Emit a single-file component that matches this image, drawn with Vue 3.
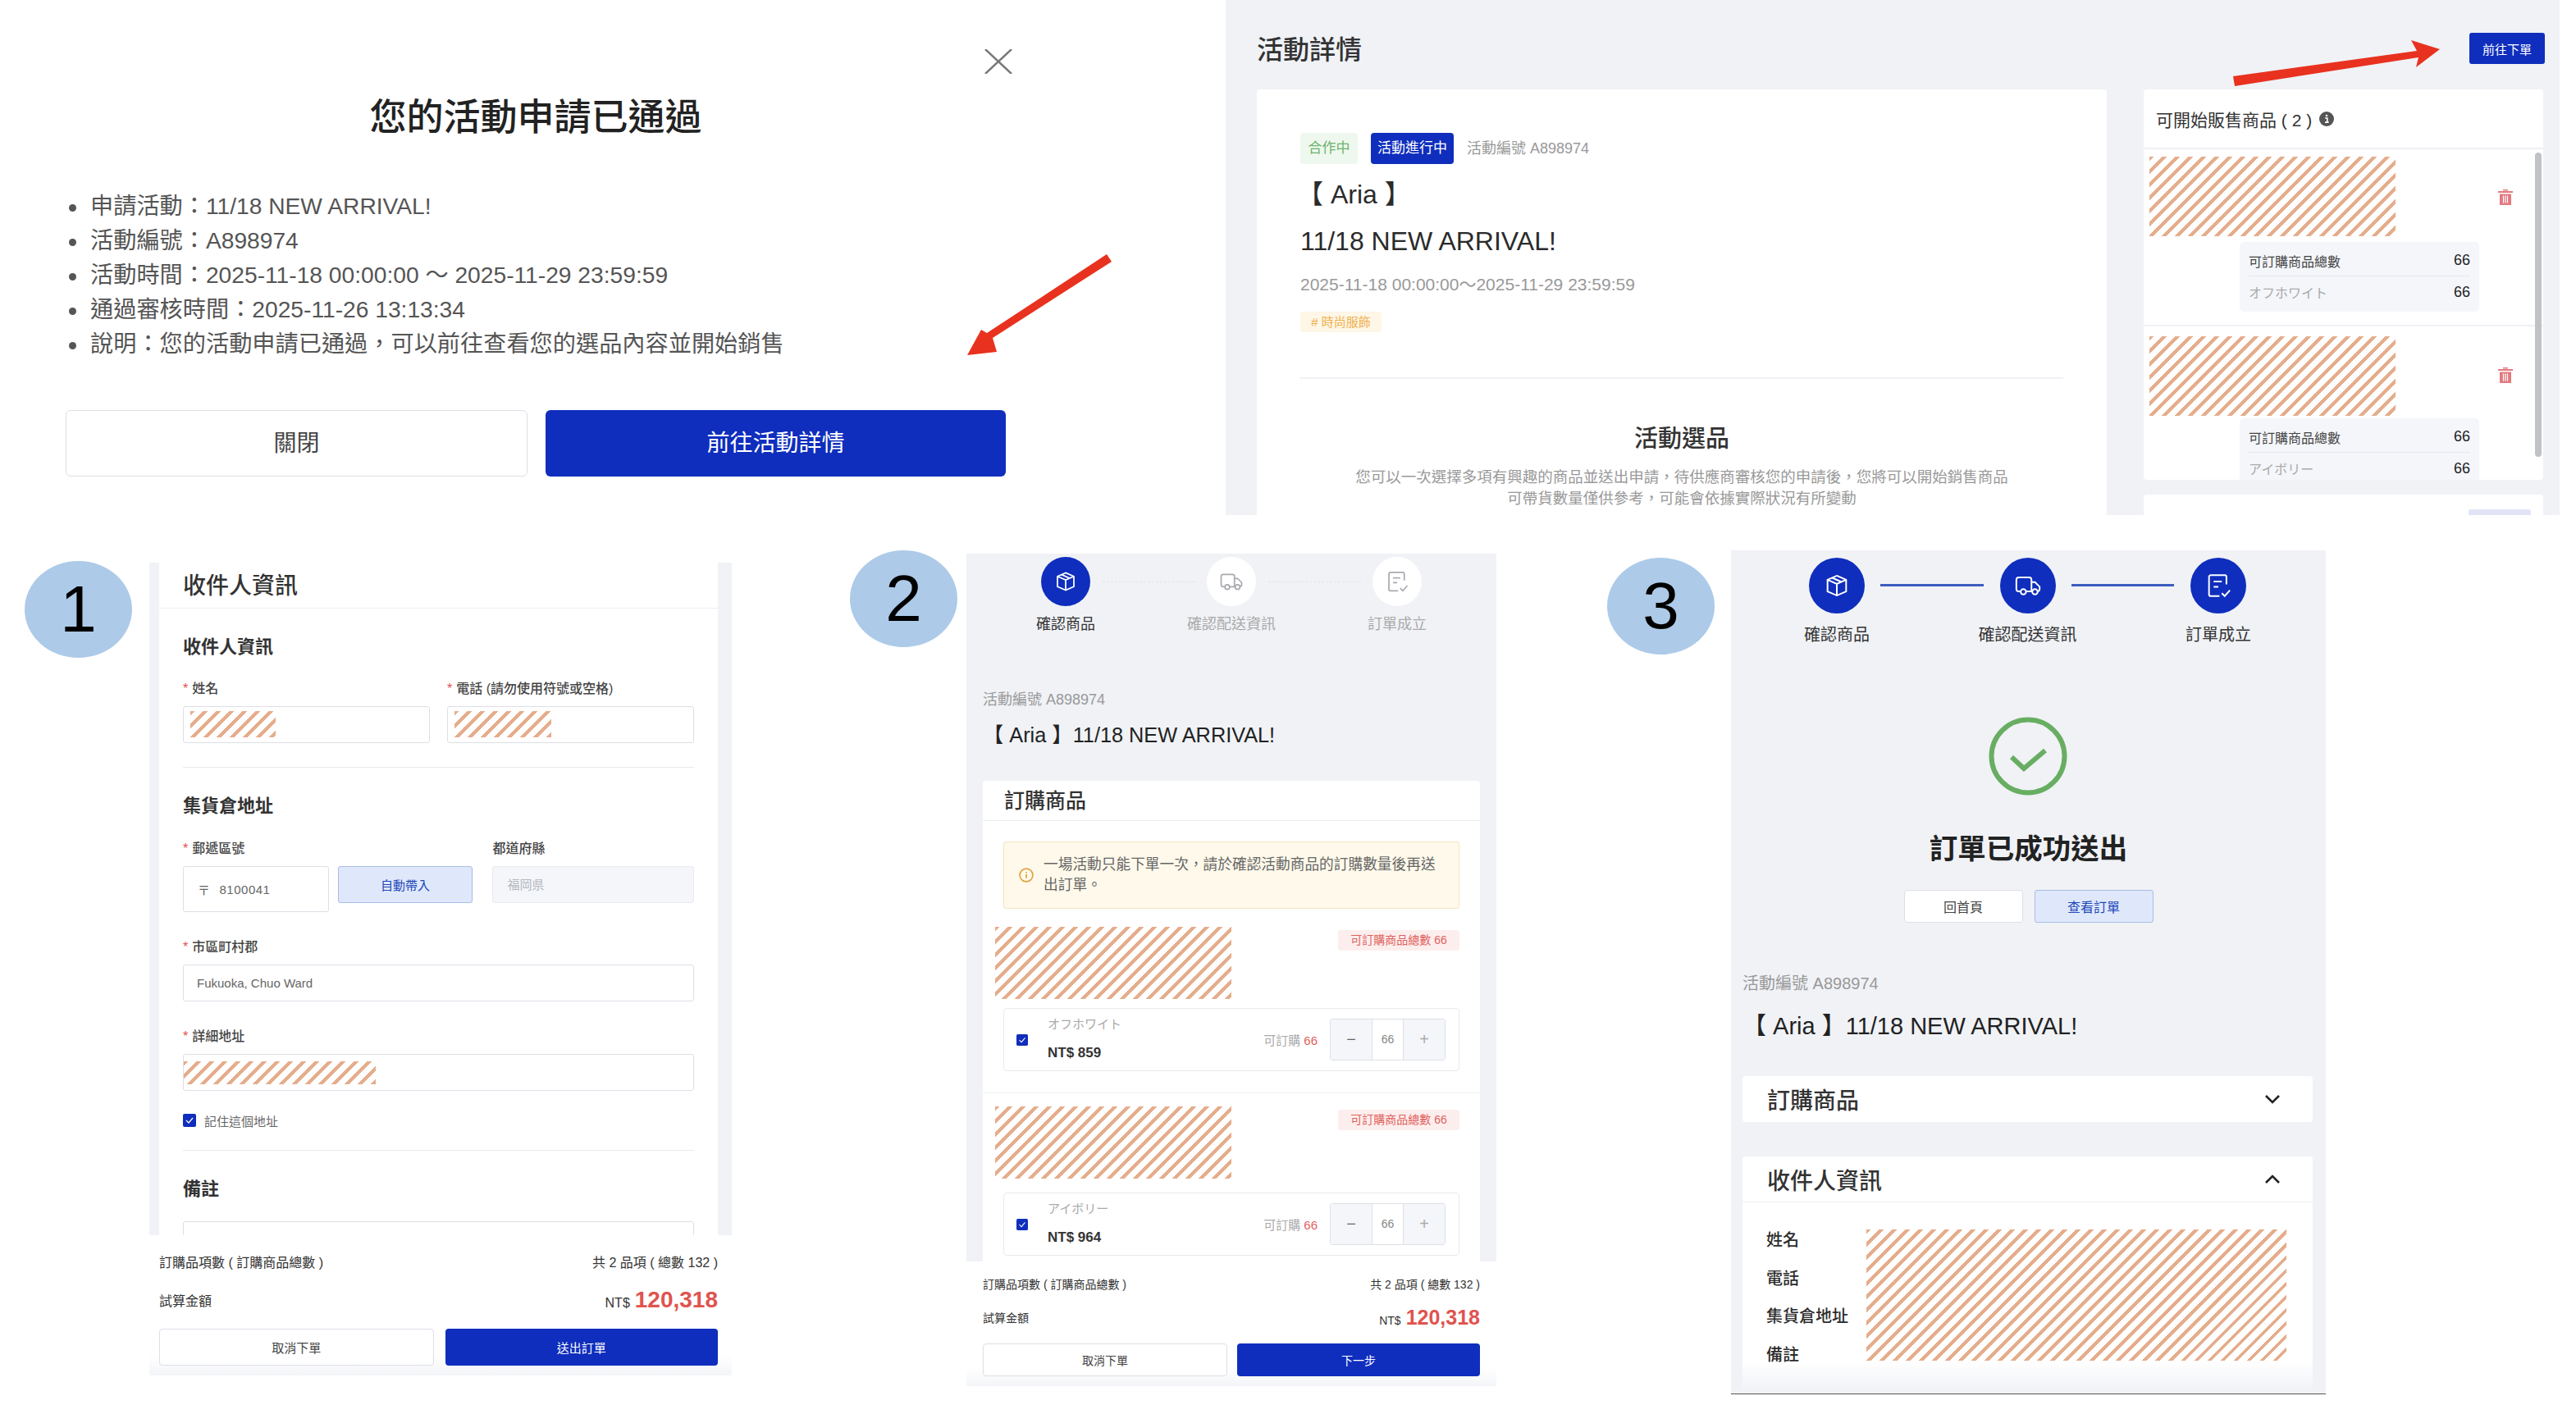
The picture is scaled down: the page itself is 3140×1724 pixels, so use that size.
<script setup>
const infoLines = [
  "申請活動：11/18 NEW ARRIVAL!",
  "活動編號：A898974",
  "活動時間：2025-11-18 00:00:00 ～ 2025-11-29 23:59:59",
  "通過審核時間：2025-11-26 13:13:34",
  "說明：您的活動申請已通過，可以前往查看您的選品內容並開始銷售",
];

const saleItems = [{ color: "オフホワイト" }, { color: "アイボリー" }];

const orderItems = [
  { color: "オフホワイト", price: "NT$ 859" },
  { color: "アイボリー", price: "NT$ 964" },
];

const steps = ["確認商品", "確認配送資訊", "訂單成立"];
const receiverRows = ["姓名", "電話", "集貨倉地址", "備註"];
</script>

<template>
  <div class="page">
    <section class="top">
      <div class="modal">
        <svg class="close" viewBox="0 0 34 30" width="34" height="30">
          <path d="M1 0 L33 30 M33 0 L1 30" stroke="#777" stroke-width="2.4" fill="none" />
        </svg>
        <h2 class="modal-title">您的活動申請已通過</h2>
        <ul class="modal-list">
          <li v-for="line in infoLines" :key="line">{{ line }}</li>
        </ul>
        <div class="modal-actions">
          <button class="btn-white">關閉</button>
          <button class="btn-blue">前往活動詳情</button>
        </div>
      </div>

      <div class="details">
        <div class="details-head">
          <h3>活動詳情</h3>
          <button class="order-btn">前往下單</button>
        </div>
        <div class="details-body">
          <div class="info-card">
            <div class="tags">
              <span class="tag-green">合作中</span>
              <span class="tag-blue">活動進行中</span>
              <span class="tag-no">活動編號 A898974</span>
            </div>
            <div class="brand">【 Aria 】</div>
            <div class="event-name">11/18 NEW ARRIVAL!</div>
            <div class="event-date">2025-11-18 00:00:00～2025-11-29 23:59:59</div>
            <span class="tag-orange"># 時尚服飾</span>
            <div class="info-line"></div>
            <div class="pick-title">活動選品</div>
            <p class="pick-desc">
              您可以一次選擇多項有興趣的商品並送出申請，待供應商審核您的申請後，您將可以開始銷售商品<br />
              可帶貨數量僅供參考，可能會依據實際狀況有所變動
            </p>
          </div>
          <div class="side">
            <div class="side-card">
              <div class="side-head">
                可開始販售商品 ( 2 )
                <svg viewBox="0 0 18 18" width="18" height="18">
                  <circle cx="9" cy="9" r="9" fill="#555" />
                  <path d="M7.2 8h2.6v5M7 13.2h4.6" stroke="#fff" stroke-width="1.7" fill="none" />
                  <circle cx="9" cy="5" r="1.3" fill="#fff" />
                </svg>
              </div>
              <div class="side-list">
                <div v-for="item in saleItems" :key="item.color" class="side-item">
                  <div class="side-top">
                    <div class="hatch side-img"></div>
                    <svg viewBox="0 0 18 20" width="18" height="20">
                      <path d="M6 2.5V1h6v1.5M0 3h18v2H0zM2 6.500h14V20H2z" fill="#e27a80" />
                      <path d="M6.500 8.500v9M9 8.500v9M11.500 8.500v9" stroke="#fff" stroke-width="1.200" />
                    </svg>
                  </div>
                  <div class="qty-box">
                    <div class="qty-row"><span>可訂購商品總數</span><b>66</b></div>
                    <div class="qty-row muted"><span>{{ item.color }}</span><b>66</b></div>
                  </div>
                </div>
                <div class="scrollbar"></div>
              </div>
            </div>
            <div class="side-card next-card"><span></span></div>
          </div>
        </div>
      </div>
    </section>

    <section class="bottom">
      <div class="col col-one">
        <div class="num">1</div>
        <div class="phone phone-one">
          <div class="phone-scroll">
            <div class="form-card">
              <div class="card-title">收件人資訊</div>
              <div class="form-body">
                <h4 class="sub first">收件人資訊</h4>
                <div class="two first-two">
                  <div class="field name-field">
                    <label class="req">姓名</label>
                    <div class="input"><div class="hatch" style="width: 104px"></div></div>
                  </div>
                  <div class="field phone-field">
                    <label class="req">電話 (請勿使用符號或空格)</label>
                    <div class="input"><div class="hatch" style="width: 118px"></div></div>
                  </div>
                </div>
                <div class="hr hr-a"></div>
                <h4 class="sub">集貨倉地址</h4>
                <div class="two zip-row">
                  <div class="field zip-field">
                    <label class="req">郵遞區號</label>
                    <div class="input zip"><span class="yen">〒</span>8100041</div>
                  </div>
                  <button class="btn-soft auto-btn">自動帶入</button>
                  <div class="field pref-field">
                    <label>都道府縣</label>
                    <div class="input disabled">福岡県</div>
                  </div>
                </div>
                <div class="field block">
                  <label class="req">市區町村郡</label>
                  <div class="input text">Fukuoka, Chuo Ward</div>
                </div>
                <div class="field block">
                  <label class="req">詳細地址</label>
                  <div class="input plain"><div class="hatch" style="width: 234px"></div></div>
                </div>
                <div class="remember">
                  <svg class="check" viewBox="0 0 16 16" width="16" height="16">
                    <rect width="16" height="16" rx="2" fill="#0f2ebd" />
                    <path d="M4 8l3 3 5-6" stroke="#fff" stroke-width="1.2" fill="none" />
                  </svg>
                  記住這個地址
                </div>
                <div class="hr hr-b"></div>
                <h4 class="sub">備註</h4>
                <div class="input note"></div>
              </div>
            </div>
          </div>
          <div class="summary">
            <div class="sum-row first-row"><span>訂購品項數 ( 訂購商品總數 )</span><span>共 2 品項 ( 總數 132 )</span></div>
            <div class="sum-row amount-row">
              <span>試算金額</span>
              <span class="amount"><small>NT$</small> <b>120,318</b></span>
            </div>
            <div class="sum-actions">
              <button class="btn-white">取消下單</button>
              <button class="btn-blue">送出訂單</button>
            </div>
          </div>
        </div>
      </div>

      <div class="col col-two">
        <div class="num">2</div>
        <div class="phone phone-two">
          <div class="phone-scroll">
            <div class="stepper">
              <template v-for="(step, i) in steps" :key="step">
                <div class="step" :class="{ on: i === 0 }">
                  <div class="dot">
                    <svg v-if="i === 0" viewBox="0 0 24 24" width="30" height="30"><path d="M12 3.500l8 3.500v10l-8 3.500-8-3.500V7zM4 7l8 3.500L20 7M12 10.500v10M8 5.300l8 3.500" /></svg>
                    <svg v-else-if="i === 1" viewBox="0 0 24 24" width="30" height="30"><path d="M5.500 17H4a2 2 0 0 1-2-2V7a2 2 0 0 1 2-2h9a2 2 0 0 1 2 2v10H10M15 9h3l4 4v2a2 2 0 0 1-2 2M15 17h.5" /><circle cx="8" cy="17.300" r="2.300" /><circle cx="18" cy="17.300" r="2.300" /></svg>
                    <svg v-else viewBox="0 0 24 24" width="30" height="30"><path d="M19 11V4.500A1.500 1.500 0 0 0 17.500 3h-12A1.500 1.500 0 0 0 4 4.500v15A1.500 1.500 0 0 0 5.500 21H13M8 8.500h7M8 13h4M15 18.500l2.500 2.500L22 16" /></svg>
                  </div>
                  <div class="step-name">{{ step }}</div>
                </div>
                <div v-if="i < 2" class="link"></div>
              </template>
            </div>
            <div class="meta">活動編號 A898974</div>
            <div class="order-title">【 Aria 】11/18 NEW ARRIVAL!</div>
            <div class="goods-card">
              <div class="card-title">訂購商品</div>
              <div class="notice">
                <svg viewBox="0 0 20 20" width="18" height="18">
                  <circle cx="10" cy="10" r="8.800" fill="none" stroke="#e0a23e" stroke-width="1.800" />
                  <path d="M10 9v5M10 5.500v1.800" stroke="#e0a23e" stroke-width="2" />
                </svg>
                <p>一場活動只能下單一次，請於確認活動商品的訂購數量後再送出訂單。</p>
              </div>
              <div v-for="item in orderItems" :key="item.color" class="good">
                <div class="good-top">
                  <div class="hatch good-img"></div>
                  <span class="limit">可訂購商品總數 66</span>
                </div>
                <div class="variant">
                  <svg viewBox="0 0 16 16" width="14" height="14">
                    <rect width="16" height="16" rx="2" fill="#0f2ebd" />
                    <path d="M4 8l3 3 5-6" stroke="#fff" stroke-width="1.200" fill="none" />
                  </svg>
                  <div class="variant-text">
                    <span>{{ item.color }}</span>
                    <b>{{ item.price }}</b>
                  </div>
                  <div class="can-buy">可訂購 <em>66</em></div>
                  <div class="counter">
                    <span class="minus">−</span>
                    <span class="count">66</span>
                    <span class="plus">+</span>
                  </div>
                </div>
              </div>
            </div>
          </div>
          <div class="summary">
            <div class="sum-row first-row"><span>訂購品項數 ( 訂購商品總數 )</span><span>共 2 品項 ( 總數 132 )</span></div>
            <div class="sum-row amount-row">
              <span>試算金額</span>
              <span class="amount"><small>NT$</small> <b>120,318</b></span>
            </div>
            <div class="sum-actions">
              <button class="btn-white">取消下單</button>
              <button class="btn-blue">下一步</button>
            </div>
          </div>
        </div>
      </div>

      <div class="col col-three">
        <div class="num">3</div>
        <div class="phone phone-three">
          <div class="stepper done">
            <template v-for="(step, i) in steps" :key="step">
              <div class="step on">
                <div class="dot">
                  <svg v-if="i === 0" viewBox="0 0 24 24" width="34" height="34"><path d="M12 3.500l8 3.500v10l-8 3.500-8-3.500V7zM4 7l8 3.500L20 7M12 10.500v10M8 5.300l8 3.500" /></svg>
                  <svg v-else-if="i === 1" viewBox="0 0 24 24" width="34" height="34"><path d="M5.500 17H4a2 2 0 0 1-2-2V7a2 2 0 0 1 2-2h9a2 2 0 0 1 2 2v10H10M15 9h3l4 4v2a2 2 0 0 1-2 2M15 17h.5" /><circle cx="8" cy="17.300" r="2.300" /><circle cx="18" cy="17.300" r="2.300" /></svg>
                  <svg v-else viewBox="0 0 24 24" width="34" height="34"><path d="M19 11V4.500A1.500 1.500 0 0 0 17.500 3h-12A1.500 1.500 0 0 0 4 4.500v15A1.500 1.500 0 0 0 5.500 21H13M8 8.500h7M8 13h4M15 18.500l2.500 2.500L22 16" /></svg>
                </div>
                <div class="step-name">{{ step }}</div>
              </div>
              <div v-if="i < 2" class="link"></div>
            </template>
          </div>
          <svg class="success" viewBox="0 0 96 96" width="96" height="96">
            <circle cx="48" cy="48" r="44.500" fill="none" stroke="#68ae62" stroke-width="6" />
            <path d="M28 49l15 14 26-22" fill="none" stroke="#68ae62" stroke-width="6" />
          </svg>
          <div class="success-title">訂單已成功送出</div>
          <div class="success-actions">
            <button class="btn-white">回首頁</button>
            <button class="btn-soft">查看訂單</button>
          </div>
          <div class="meta">活動編號 A898974</div>
          <div class="order-title">【 Aria 】11/18 NEW ARRIVAL!</div>
          <div class="fold-card closed">
            <div class="fold-head">
              訂購商品
              <svg viewBox="0 0 20 12" width="20" height="12"><path d="M2 2l8 8 8-8" fill="none" stroke="#222" stroke-width="2.600" /></svg>
            </div>
          </div>
          <div class="fold-card open">
            <div class="fold-head">
              收件人資訊
              <svg viewBox="0 0 20 12" width="20" height="12"><path d="M2 10l8-8 8 8" fill="none" stroke="#222" stroke-width="2.600" /></svg>
            </div>
            <div class="receiver">
              <div class="receiver-labels">
                <span v-for="row in receiverRows" :key="row">{{ row }}</span>
              </div>
              <div class="hatch receiver-img"></div>
            </div>
          </div>
          <div class="fade"></div>
        </div>
      </div>
    </section>

    <svg class="arrows" viewBox="0 0 3140 1724" width="3140" height="1724">
      <polygon points="1349,310 1355,319 1210,412 1215,429 1179,433 1196,402 1203,406" fill="#e8321f" />
      <polygon points="2974,60 2939,49 2946,62 2722,93 2724,105 2948,70 2945,82" fill="#e8321f" />
    </svg>
  </div>
</template>

<style>
html,
body {
  margin: 0;
  background: #fff;
}
</style>

<style scoped>
* {
  box-sizing: border-box;
}

.page {
  position: relative;
  width: 3140px;
  height: 1724px;
  overflow: hidden;
  background: #fff;
  color: #2b2b2b;
  font-family: "Liberation Sans", "Noto Sans CJK TC", sans-serif;
}

h2,
h3,
h4,
p,
ul {
  margin: 0;
  padding: 0;
  font-weight: 400;
}

button {
  border: 0;
  padding: 0;
  font-family: inherit;
  cursor: pointer;
}

.hatch {
  background: repeating-linear-gradient(135deg, #e5ad8c 0 4px, #fff 4px 11.300px);
}

.btn-white {
  background: #fff;
  border: 1px solid #dcdfe6;
  border-radius: 4px;
  color: #444;
}

.btn-blue {
  background: #0f2ebd;
  border-radius: 4px;
  color: #fff;
}

.btn-soft {
  background: #dfe8fb;
  border: 1px solid #a9bbe6;
  border-radius: 3px;
  color: #2147b8;
}

/* top row */
.top {
  display: flex;
  height: 628px;
}

.modal {
  position: relative;
  width: 1494px;
  padding: 114px 0 0 80px;
}

.close {
  position: absolute;
  left: 1200px;
  top: 60px;
}

.modal-title {
  width: 1146px;
  height: 60px;
  font-size: 45px;
  font-weight: 500;
  line-height: 60px;
  text-align: center;
  color: #222;
}

.modal-list {
  margin-top: 56px;
  padding-left: 30px;
  font-size: 28.200px;
  line-height: 42px;
  color: #555;
  list-style: none;
}

.modal-list li::before {
  content: "";
  display: inline-block;
  width: 9px;
  height: 9px;
  margin: 0 17px 0 -26px;
  border-radius: 50%;
  background: #555;
  vertical-align: middle;
}

.modal-actions {
  display: flex;
  gap: 22px;
  width: 1146px;
  margin-top: 60px;
}

.modal-actions button {
  flex: 1;
  height: 81px;
  border-radius: 6px;
  font-size: 28px;
  line-height: 78px;
}

.details {
  width: 1626px;
  height: 628px;
  overflow: hidden;
  padding: 40px 18px 0 38px;
  background: #f0f2f6;
}

.details-head {
  display: flex;
  justify-content: space-between;
  align-items: center;
  height: 38px;
}

.details-head h3 {
  font-size: 32px;
  font-weight: 500;
  color: #333;
  margin-top: -2px;
}

.order-btn {
  width: 92px;
  height: 38px;
  background: #0f2ebd;
  border-radius: 3px;
  color: #fff;
  font-size: 15px;
}

.details-body {
  display: flex;
  gap: 45px;
  margin-top: 31px;
}

.info-card {
  width: 1036px;
  height: 560px;
  padding: 53px 53px 0;
  background: #fff;
  border-radius: 4px;
}

.tags {
  display: flex;
  align-items: center;
  gap: 16px;
  height: 38px;
}

.tags span {
  height: 38px;
  line-height: 38px;
  border-radius: 4px;
  font-size: 17px;
  text-align: center;
}

.tag-green {
  width: 70px;
  background: #eef8ee;
  color: #6fb36f;
}

.tag-blue {
  width: 101px;
  background: #0f2ebd;
  color: #fff;
}

.tags .tag-no {
  font-size: 18px;
  color: #999;
}

.brand {
  margin-top: 17px;
  height: 40px;
  line-height: 40px;
  font-size: 32px;
  margin-left: -4px;
}

.event-name {
  margin-top: 15px;
  height: 44px;
  line-height: 44px;
  font-size: 32px;
}

.event-date {
  margin-top: 18px;
  height: 26px;
  line-height: 26px;
  font-size: 21px;
  color: #999;
}

.tag-orange {
  display: block;
  width: 99px;
  height: 25px;
  margin-top: 20px;
  background: #fef6e6;
  border-radius: 4px;
  color: #eeb04e;
  font-size: 15px;
  line-height: 25px;
  text-align: center;
}

.info-line {
  height: 2px;
  margin-top: 55px;
  background: #eef0f4;
}

.pick-title {
  margin-top: 53px;
  height: 40px;
  line-height: 40px;
  font-size: 29px;
  font-weight: 500;
  text-align: center;
  color: #333;
}

.pick-desc {
  margin-top: 14px;
  font-size: 18.500px;
  line-height: 26px;
  text-align: center;
  color: #999;
}

.side {
  width: 487px;
}

.side-card {
  height: 476px;
  background: #fff;
  border-radius: 4px;
  overflow: hidden;
}

.side-head {
  display: flex;
  align-items: center;
  gap: 9px;
  height: 73px;
  padding-left: 15px;
  border-bottom: 2px solid #eef0f4;
  font-size: 21px;
  color: #333;
}

.side-list {
  position: relative;
  height: 403px;
  overflow: hidden;
}

.side-item {
  padding-top: 12px;
  padding-bottom: 16px;
  border-bottom: 2px solid #eef0f4;
}

.side-item:first-child {
  padding-top: 9px;
}

.side-top {
  display: flex;
  justify-content: space-between;
  align-items: center;
  padding: 0 37px 0 7px;
}

.side-item + .side-item .side-top svg {
  margin-top: -4px;
}

.side-img {
  width: 300px;
  height: 97px;
}

.qty-box {
  width: 292px;
  height: 85px;
  margin: 7px 0 0 117px;
  padding: 4px 11px 0;
  background: #f4f6fa;
  border-radius: 5px;
}

.side-item + .side-item .qty-box {
  margin-top: 3px;
}

.qty-row {
  display: flex;
  justify-content: space-between;
  align-items: center;
  height: 38px;
  font-size: 16px;
  color: #444;
}

.qty-row:first-child {
  border-bottom: 1px solid #e6e8ee;
}

.qty-row b {
  font-weight: 400;
  font-size: 18px;
  color: #222;
}

.qty-row.muted span {
  color: #aaa;
}

.scrollbar {
  position: absolute;
  left: 477px;
  top: 4px;
  width: 8px;
  height: 371px;
  background: #c0c2c6;
  border-radius: 4px;
}

.next-card {
  display: flex;
  justify-content: flex-end;
  margin-top: 18px;
  padding: 18px 15px 0 0;
}

.next-card span {
  width: 76px;
  height: 20px;
  background: #e0e4f5;
  border-radius: 3px;
}

/* bottom row */
.bottom {
  display: flex;
  align-items: flex-start;
  margin-top: 43px;
}

.col {
  display: flex;
  align-items: flex-start;
  gap: 21px;
}

.col-one {
  margin-left: 30px;
}

.col-two {
  margin-left: 144px;
  gap: 11px;
}

.col-three {
  margin-left: 135px;
  gap: 20px;
}

.num {
  width: 131px;
  height: 118px;
  border-radius: 50%;
  background: #adcae8;
  color: #000;
  font-size: 80px;
  line-height: 118px;
  text-align: center;
}

.col-one .num {
  margin-top: 13px;
}

.col-three .num {
  margin-top: 9px;
}

.phone {
  position: relative;
  display: flex;
  flex-direction: column;
  background: #f0f2f6;
  overflow: hidden;
}

.phone-one {
  width: 710px;
  height: 991px;
  margin-top: 15px;
}

.phone-two {
  width: 646px;
  height: 1015px;
  margin-top: 4px;
}

.phone-three {
  width: 725px;
  height: 1029px;
  border-bottom: 1px solid #555;
}

.phone-scroll {
  flex: 1;
  min-height: 0;
  overflow: hidden;
}

.form-card {
  width: 681px;
  margin-left: 12px;
  background: #fff;
}

.card-title {
  height: 56px;
  padding-left: 29px;
  border-bottom: 1px solid #eceef2;
  font-size: 28px;
  font-weight: 500;
  line-height: 58px;
  color: #333;
}

.form-body {
  padding: 0 29px;
}

.sub {
  margin-top: 31px;
  height: 28px;
  font-size: 22px;
  font-weight: 700;
  line-height: 31px;
  color: #333;
}

.two {
  display: flex;
  justify-content: space-between;
  margin-top: 28px;
}

.first-two {
  margin-top: 27px;
}

.field label {
  display: block;
  height: 20px;
  margin-bottom: 13px;
  font-size: 16px;
  font-weight: 500;
  line-height: 24px;
  color: #444;
}

.field label.req::before {
  content: "*";
  margin-right: 5px;
  color: #e0524a;
}

.name-field,
.phone-field {
  width: 301px;
}

.input {
  height: 45px;
  padding: 5px 8px;
  background: #fff;
  border: 1px solid #dcdfe6;
  border-radius: 3px;
  color: #666;
  font-size: 15px;
}

.input .hatch {
  height: 32px;
}

.hr {
  height: 1px;
  background: #e8eaee;
}

.hr-a {
  margin-top: 29px;
}

.hr-b {
  margin-top: 28px;
}

.zip-row {
  height: 89px;
}

.zip-field {
  width: 178px;
}

.zip {
  display: flex;
  align-items: center;
  height: 56px;
  padding-left: 17px;
  letter-spacing: 0.5px;
}

.yen {
  margin-right: 11px;
}

.auto-btn {
  width: 165px;
  height: 45px;
  margin-top: 33px;
  margin-left: 11px;
  font-size: 15px;
}

.pref-field {
  width: 246px;
  margin-left: 24px;
}

.disabled {
  background: #f4f6fa;
  border-color: #e8eaee;
  color: #b5b8bf;
  line-height: 33px;
  padding-left: 17px;
}

.block {
  margin-top: 31px;
}

.text {
  line-height: 33px;
  padding-left: 16px;
}

.plain {
  padding: 8px 0;
}

.plain .hatch {
  height: 28px;
}

.remember {
  display: flex;
  align-items: center;
  gap: 10px;
  height: 16px;
  margin-top: 28px;
  font-size: 15px;
  color: #666;
}

.note {
  margin-top: 27px;
}

.summary {
  flex: none;
  padding: 20px 17px 0 12px;
  background: linear-gradient(#fff 85%, #f4f5f8);
}

.phone-one .summary {
  height: 171px;
}

.sum-row {
  display: flex;
  justify-content: space-between;
  align-items: center;
  font-size: 16px;
  color: #333;
}

.first-row {
  height: 24px;
}

.amount-row {
  height: 40px;
  margin-top: 15px;
}

.amount {
  display: flex;
  align-items: baseline;
  gap: 6px;
}

.amount small {
  font-size: 16px;
}

.amount b {
  font-size: 28px;
  color: #e0534f;
}

.sum-actions {
  display: flex;
  gap: 14px;
  margin-top: 15px;
}

.sum-actions button {
  flex: 1;
  height: 45px;
  font-size: 15px;
}

.phone-two .summary {
  height: 152px;
  padding: 15px 20px 0;
}

.phone-two .sum-row {
  font-size: 14px;
}

.phone-two .amount-row {
  margin-top: 9px;
}

.phone-two .amount small {
  font-size: 14px;
}

.phone-two .amount b {
  font-size: 25px;
}

.phone-two .sum-actions {
  gap: 12px;
  margin-top: 12px;
}

.phone-two .sum-actions button {
  height: 40px;
  font-size: 14px;
}

.stepper {
  display: flex;
  padding: 4px 60px 0;
}

.step {
  flex: none;
  width: 122px;
  text-align: center;
}

.dot {
  display: flex;
  justify-content: center;
  align-items: center;
  width: 60px;
  height: 60px;
  margin: 0 auto;
  background: #fff;
  border-radius: 50%;
}

.dot svg {
  fill: none;
  stroke: #a9abb0;
  stroke-width: 1.400;
}

.step.on .dot {
  background: #0f2ebd;
}

.step.on .dot svg {
  stroke: #fff;
}

.step-name {
  margin-top: 10px;
  height: 24px;
  font-size: 18px;
  line-height: 24px;
  color: #aaa;
  white-space: nowrap;
}

.step.on .step-name {
  color: #333;
}

.link {
  flex: 1;
  height: 0;
  margin: 30px -17px 0 -16px;
  border-top: 1px dashed #dfe1e6;
}

.meta {
  height: 20px;
  margin: 70px 0 0 20px;
  font-size: 18px;
  line-height: 20px;
  color: #999;
}

.order-title {
  height: 34px;
  margin: 16px 0 0 20px;
  font-size: 25.300px;
  line-height: 34px;
  color: #222;
}

.goods-card {
  width: 606px;
  margin: 39px 0 0 20px;
  background: #fff;
  border-radius: 4px 4px 0 0;
}

.goods-card .card-title {
  height: 49px;
  padding-left: 26px;
  font-size: 25px;
  line-height: 48px;
}

.notice {
  display: flex;
  align-items: center;
  gap: 12px;
  height: 82px;
  margin: 25px 25px 0;
  padding: 0 25px 0 18px;
  background: #fef9ea;
  border: 1px solid #f3e6bd;
  border-radius: 3px;
}

.notice svg {
  flex: none;
}

.notice p {
  font-size: 17.700px;
  line-height: 25px;
  color: #666;
}

.good {
  padding: 16px 25px 26px 15px;
  border-bottom: 1px solid #eef0f4;
}

.notice + .good {
  padding-top: 22px;
}

.good-top {
  display: flex;
  justify-content: space-between;
  align-items: flex-start;
}

.good-img {
  width: 288px;
  height: 88px;
}

.limit {
  width: 148px;
  height: 25px;
  margin-top: 4px;
  background: #fdeeee;
  border-radius: 3px;
  color: #e0615c;
  font-size: 14px;
  line-height: 25px;
  text-align: center;
}

.variant {
  display: flex;
  align-items: center;
  height: 77px;
  margin: 11px 0 0 10px;
  padding-left: 15px;
  border: 1px solid #e8eaee;
  border-radius: 4px;
}

.good + .good .variant {
  margin-top: 17px;
}

.variant-text {
  display: flex;
  flex-direction: column;
  gap: 17px;
  margin: -2px 0 0 24px;
  font-size: 15px;
  line-height: 18px;
  color: #aaa;
}

.variant-text b {
  color: #333;
  font-size: 17px;
}

.can-buy {
  margin-left: auto;
  font-size: 15px;
  color: #aaa;
}

.can-buy em {
  font-style: normal;
  color: #e0615c;
}

.counter {
  display: flex;
  flex: none;
  width: 141px;
  height: 51px;
  margin: 0 16px 0 15px;
  border: 1px solid #dde0e6;
  border-radius: 3px;
  text-align: center;
  line-height: 49px;
  font-size: 14px;
  color: #888;
}

.minus,
.plus {
  flex: 1;
  background: #f4f6fa;
  font-size: 20px;
  color: #666;
}

.plus {
  color: #aaa;
}

.count {
  width: 39px;
  border-left: 1px solid #dde0e6;
  border-right: 1px solid #dde0e6;
}

.done {
  padding: 9px 61px 0 59px;
}

.done .step {
  width: 140px;
}

.done .dot {
  width: 68px;
  height: 68px;
}

.done .step-name {
  margin-top: 13px;
  height: 26px;
  font-size: 20px;
  line-height: 26px;
}

.done .link {
  height: 0;
  margin: 32px -16px 0 -17px;
  border-top: 3px solid #3c5dc0;
}

.success {
  display: block;
  margin: 87px auto 0;
  transform: translateX(-1px);
}

.success-title {
  height: 44px;
  margin-top: 43px;
  font-size: 34.500px;
  font-weight: 700;
  line-height: 44px;
  text-align: center;
  color: #222;
}

.success-actions {
  display: flex;
  justify-content: center;
  gap: 14px;
  margin-top: 28px;
}

.success-actions button {
  width: 145px;
  height: 40px;
  font-size: 16px;
}

.phone-three .meta {
  height: 22px;
  margin: 63px 0 0 14px;
  font-size: 20px;
  line-height: 22px;
}

.phone-three .order-title {
  height: 38px;
  margin: 22px 0 0 14px;
  font-size: 29px;
  line-height: 38px;
}

.fold-card {
  margin: 0 16px 0 14px;
  background: #fff;
  border-radius: 4px;
}

.closed {
  margin-top: 42px;
}

.open {
  margin-top: 42px;
}

.fold-head {
  display: flex;
  justify-content: space-between;
  align-items: center;
  height: 56px;
  padding: 0 39px 0 30px;
  font-size: 28px;
  font-weight: 500;
  color: #333;
}

.open .fold-head {
  border-bottom: 1px solid #eceef2;
}

.receiver {
  display: flex;
  gap: 22px;
  padding: 34px 0 30px 29px;
}

.receiver-labels {
  display: flex;
  flex-direction: column;
  gap: 22.500px;
  width: 100px;
  font-size: 20px;
  line-height: 24px;
  font-weight: 500;
  white-space: nowrap;
}

.receiver-img {
  width: 512px;
  height: 160px;
  margin-top: -1px;
}

.fade {
  position: absolute;
  left: 0;
  right: 0;
  bottom: 0;
  height: 40px;
  background: linear-gradient(rgba(240, 242, 246, 0), #f0f2f6);
}

.arrows {
  position: absolute;
  left: 0;
  top: 0;
  pointer-events: none;
}
</style>
